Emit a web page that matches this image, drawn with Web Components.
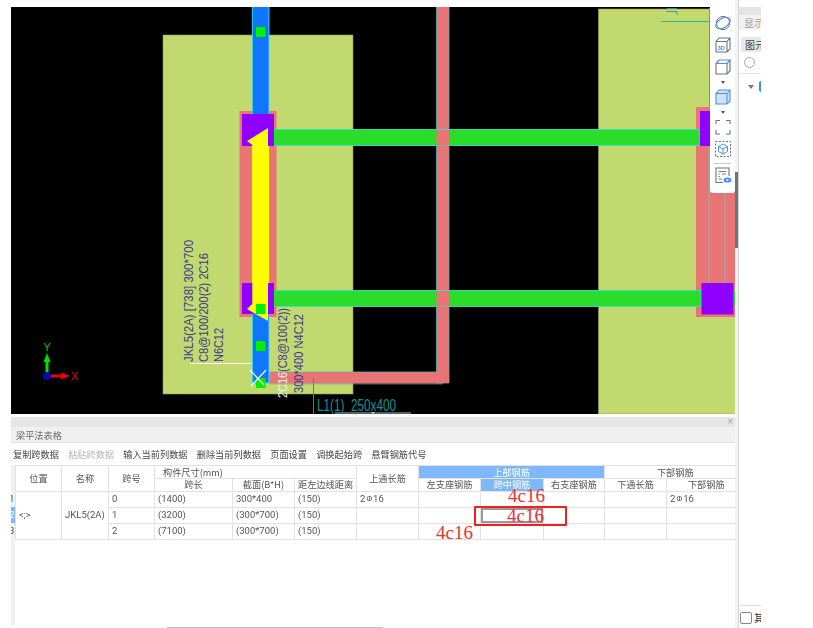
<!DOCTYPE html>
<html lang="zh">
<head>
<meta charset="utf-8">
<title>梁平法表格</title>
<style>
  html, body { margin: 0; height: 100%; background: #fff; overflow: hidden; }
  body { font-family: "Noto Sans CJK SC", "Liberation Sans", sans-serif; }
</style>
</head>
<body>
<beam-app>
  <cad-viewport slot="main"><view-toolbar></view-toolbar></cad-viewport>
  <beam-panel slot="main" title="梁平法表格">
    <span-table></span-table>
  </beam-panel>
  <side-panel slot="side"></side-panel>
</beam-app>

<script>
class BeamApp extends HTMLElement {
  constructor() {
    super();
    this.attachShadow({ mode: 'open' });
    this.shadowRoot.innerHTML = `
      <style>
        :host { display: flex; height: 628px; width: 761px; padding-left: 11px; box-sizing: border-box; overflow: hidden; }
        .main { width: 724px; display: flex; flex-direction: column; padding-top: 7px; box-sizing: border-box; }
        .side { width: 26px; display: flex; }
      </style>
      <div class="main"><slot name="main"></slot></div>
      <div class="side"><slot name="side"></slot></div>
    `;
  }
}

class CadViewport extends HTMLElement {
  constructor() {
    super();
    this.attachShadow({ mode: 'open' });
    const beamEdge = '#35e0d0';
    const squares = [[256, 27], [256, 304], [256, 341], [256, 378]]
      .map(([x, y]) => `<rect x="${x}" y="${y}" width="9.5" height="10" fill="#00f000"/>`)
      .join('');
    this.shadowRoot.innerHTML = `
      <style>
        :host { display: block; position: relative; width: 724px; height: 407px; background: #000; flex: none; }
        svg { display: block; }
        .cad { font-family: "Liberation Sans Narrow", "Liberation Sans", sans-serif; font-size: 13px; fill: #3d3a8e; }
        .axis { font-family: "Liberation Sans Narrow", "Liberation Sans", sans-serif; font-size: 11px; }
        .thumb { position: absolute; left: 324px; bottom: 0; width: 76px; height: 2px; background: #55606c; }
        .thumb::after { content: ""; position: absolute; left: 36px; top: 0; border: 2px solid transparent; border-top: 2px solid #c8ccd0; border-bottom: 0; }
      </style>
      <svg width="724" height="407" viewBox="11 7 724 407">
        <!-- slabs -->
        <rect x="163" y="35" width="190" height="359" fill="#c2d96f" stroke="#8f9f55" stroke-width=".6"/>
        <rect x="598.5" y="9" width="137" height="405" fill="#c2d96f" stroke="#8f9f55" stroke-width=".6"/>
        <path d="M661 21.500H709M709.500 8V107" stroke="#2fb59a" stroke-width="1" fill="none"/>
        <path d="M667 8.500H677M666 11.500H677V15" stroke="#2a9f96" stroke-width=".9" fill="none"/>

        <!-- pink beam L1 -->
        <rect x="436.500" y="6" width="12.500" height="377" fill="#ea7474" stroke="#45b8b8" stroke-width=".8"/>
        <rect x="269" y="372" width="180" height="11" fill="#ea7474"/>
        <path d="M269 372H436.500" stroke="#5fb0a8" stroke-width=".8" fill="none"/>
        <path d="M269 383.800H443" stroke="#8f9c94" stroke-width="1" fill="none"/>

        <!-- right column stack -->
        <rect x="696" y="107" width="40" height="210" fill="#ea7474"/>
        <path d="M709 146V283M725 146V283" stroke="#a0a0a0" stroke-width="1.600"/>

        <!-- left column stack -->
        <rect x="239.500" y="111" width="37" height="206" fill="#ea7474"/>

        <!-- green beams -->
        <rect x="273.500" y="129.500" width="426.500" height="16" fill="#2bdd2b" stroke="${beamEdge}" stroke-width=".9"/>
        <rect x="273.500" y="290.500" width="427.500" height="16" fill="#2bdd2b" stroke="${beamEdge}" stroke-width=".9"/>
        <rect x="733" y="290.500" width="3" height="16" fill="#2bdd2b"/>
        <rect x="436.500" y="130" width="12.500" height="15.500" fill="#ea7474"/>
        <rect x="436.500" y="291" width="12.500" height="15.500" fill="#ea7474"/>

        <rect x="252.300" y="6" width="16.700" height="377" fill="#1176ff" stroke="#3fe0ee" stroke-width=".9"/>
        <rect x="242" y="114" width="32" height="32" fill="#8f00ff"/>
        <rect x="242" y="283" width="32" height="31" fill="#8f00ff"/>
        <rect x="252.300" y="146" width="16.700" height="137" fill="#ffff00"/>
        <polygon points="268,128 247,141 252.300,145 252.300,304 247,309 268,321" fill="#ffff00"/>
        <rect x="700" y="111" width="34" height="35" fill="#8f00ff"/>
        <rect x="701.500" y="283" width="32" height="31.500" fill="#8f00ff"/>
        ${squares}

        <!-- leader lines -->
        <path d="M190 363.500H252" stroke="#fff" stroke-width="1"/>
        <path d="M251 386L266 370M250 370L264 385" stroke="#fff" stroke-width="1.200"/>
        <path d="M313.500 378V414" stroke="#129a96" stroke-width="1"/>

        <!-- annotations -->
        <text class="cad" transform="translate(193 362) rotate(-90)" textLength="122" lengthAdjust="spacingAndGlyphs">JKL5(2A) [738] 300*700</text>
        <text class="cad" transform="translate(208 362) rotate(-90)" textLength="109" lengthAdjust="spacingAndGlyphs">C8@100/200(2) 2C16</text>
        <text class="cad" transform="translate(223 362) rotate(-90)" textLength="34" lengthAdjust="spacingAndGlyphs">N6C12</text>
        <text class="cad" transform="translate(287 398) rotate(-90)" textLength="90" lengthAdjust="spacingAndGlyphs"><tspan fill="#eeeeee">2C16</tspan>(C8@100(2))</text>
        <text class="cad" transform="translate(303 393) rotate(-90)" textLength="79" lengthAdjust="spacingAndGlyphs">300*400 N4C12</text>
        <text x="317" y="411" font-family="'Liberation Sans Narrow','Liberation Sans',sans-serif" font-size="16" fill="#0f9494" textLength="79" lengthAdjust="spacingAndGlyphs" xml:space="preserve">L1(1)  250x400</text>

        <!-- axis gizmo -->
        <path d="M47 376V361" stroke="#00e000" stroke-width="3"/>
        <polygon points="47,353 43.500,362 50.500,362" fill="#00e000"/>
        <path d="M47 376H62" stroke="#f00000" stroke-width="3"/>
        <polygon points="70,376 61,372.500 61,379.500" fill="#f00000"/>
        <circle cx="47" cy="376" r="4" fill="#0808b0"/>
        <text class="axis" x="43.500" y="351" fill="#00c800">Y</text>
        <text class="axis" x="71" y="380" fill="#e80000">X</text>
      </svg>
      <div class="thumb"></div>
      <slot></slot>
    `;
  }
}

class ViewToolbar extends HTMLElement {
  constructor() {
    super();
    this.attachShadow({ mode: 'open' });
    const g = '#6a7484';
    const b = '#4a90e2';
    const caret = `<i class="caret"></i>`;
    const icon = (inner) => `<svg width="18" height="18" viewBox="0 0 18 18" fill="none">${inner}</svg>`;
    this.shadowRoot.innerHTML = `
      <style>
        :host { position: absolute; top: 0; right: 0; width: 25px; height: 186px; background: #fff; border-radius: 0 0 3px 3px; display: flex; flex-direction: column; align-items: center; padding-top: 7px; box-sizing: border-box; }
        svg { display: block; flex: none; }
        .caret { display: block; width: 0; height: 0; border: 2.500px solid transparent; border-top: 3px solid #555; border-bottom: 0; margin: 5px 0 4px; }
        .gap { height: 4px; flex: none; }
        .sep { width: 17px; height: 1px; background: #c8c8c8; margin: 5px 0 2px; flex: none; }
      </style>
      ${icon(`<circle cx="9" cy="9" r="6.600" stroke="${g}" stroke-width="1"/><ellipse cx="9" cy="9" rx="8" ry="4.600" transform="rotate(-32 9 9)" stroke="${b}" stroke-width="1.200"/>`)}
      <div class="gap"></div>
      ${icon(`<path d="M2 5.500L5 2H16V13L13 16H2Z M2 5.500H13V16 M13 5.500L16 2" stroke="${g}" stroke-width="1.100"/><text x="3.500" y="13.500" font-size="5.500" font-weight="700" fill="${b}" font-family="Liberation Sans, sans-serif">3D</text>`)}
      <div class="gap"></div>
      ${icon(`<path d="M2 5.500V16H13L16 13V2" stroke="${g}" stroke-width="1.100"/><path d="M13 5.500V16" stroke="${g}" stroke-width="1.100"/><path d="M2 5.500L5 2H16L13 5.500H2" stroke="${b}" stroke-width="1.200"/>`)}
      ${caret}
      ${icon(`<path d="M2 5.500L5 2H16V13L13 16H2Z" fill="#cfe2fa" stroke="${b}" stroke-width="1.100"/><path d="M2 5.500H13V16M13 5.500L16 2" stroke="${b}" stroke-width="1"/>`)}
      ${caret}
      ${icon(`<path d="M2 6V2.500H6M12 2.500H16V6M16 12V16H12M6 16H2V12" stroke="${g}" stroke-width="1.100"/>`)}
      <div class="gap"></div>
      ${icon(`<rect x="1.500" y="1.500" width="15" height="15" stroke="${g}" stroke-width="1" stroke-dasharray="2 1.500"/><path d="M9 4L13.500 6.500V11.500L9 14L4.500 11.500V6.500ZM4.500 6.500L9 9L13.500 6.500M9 9V14" stroke="${b}" stroke-width="1"/>`)}
      <div class="sep"></div>
      ${icon(`<path d="M15 10V2H2V16.500H9" stroke="${g}" stroke-width="1.100"/><path d="M4.500 5.500H12M4.500 8H6M8 8H12M4.500 10.500H6M4.500 13H8" stroke="${g}" stroke-width=".9"/><ellipse cx="13.500" cy="14" rx="4" ry="2.600" fill="${b}"/><circle cx="13.500" cy="14" r="1.100" fill="#fff"/>`)}
    `;
  }
}

class BeamPanel extends HTMLElement {
  constructor() {
    super();
    this.attachShadow({ mode: 'open' });
    const actions = [
      ['复制跨数据'], ['粘贴跨数据', true], ['输入当前列数据'], ['删除当前列数据'],
      ['页面设置'], ['调换起始跨'], ['悬臂钢筋代号'],
    ];
    this.shadowRoot.innerHTML = `
      <style>
        :host { display: flex; flex-direction: column; margin-top: 3px; flex: 1; min-height: 0; font-size: 9.200px; color: #555; }
        .grip { height: 10px; background: #e6e6e6; display: flex; justify-content: flex-end; align-items: center; padding-right: 2px; color: #a8a8a8; font: 10px/10px "Liberation Sans", sans-serif; }
        .title { height: 15px; background: #f0f0f0; border-bottom: 1px solid #e2e2e2; padding-left: 5px; line-height: 16px; color: #666; filter: blur(.25px); }
        .actions { height: 22px; display: flex; gap: 9.200px; padding-left: 2px; align-items: center; color: #444; filter: blur(.25px); }
        .actions .off { color: #b8b8b8; }
        .scroll { height: 1px; width: 216px; margin-left: 156px; background: #bdbdbd; }
      </style>
      <div class="grip"><span>×</span></div>
      <div class="title"></div>
      <div class="actions">${actions
        .map(([label, off]) => `<span class="${off ? 'off' : ''}">${label}</span>`)
        .join('')}</div>
      <slot></slot>
      <div class="scroll"></div>
    `;
    this.shadowRoot.querySelector('.title').textContent = this.getAttribute('title');
  }
}

class SpanTable extends HTMLElement {
  constructor() {
    super();
    this.attachShadow({ mode: 'open' });
    const widths = [46, 47, 46, 78, 62, 62, 62, 62, 63, 61, 62, 69];
    const bar = `2<span class="bar">Φ</span>16`;
    const rows = [
      ['0', '(1400)', '300*400', '(150)', bar, '', '', '', '', bar],
      ['1', '(3200)', '(300*700)', '(150)', '', '', '', '', '', ''],
      ['2', '(7100)', '(300*700)', '(150)', '', '', '', '', '', ''],
    ];
    const body = rows
      .map((r, i) => {
        const lead = i === 0
          ? `<td rowspan="3" class="pos">&lt;;&gt;</td><td rowspan="3" class="c">JKL5(2A)</td>`
          : '';
        const cells = r
          .map((v, j) => `<td${i === 1 && j === 6 ? ' class="sel"' : ''}>${v}</td>`)
          .join('');
        return `<tr>${lead}${cells}</tr>`;
      })
      .join('');
    this.shadowRoot.innerHTML = `
      <style>
        :host { display: flex; flex: 1; min-height: 0; position: relative; font-size: 9.200px; color: #555; }
        .gutter { width: 4px; flex: none; background: #f0f0f0; padding-top: 26px; margin-bottom: 2px; overflow: hidden; box-sizing: border-box; font: 9.500px/16px Roboto, sans-serif; }
        .gutter div { height: 16px; text-indent: -2px; }
        .gutter .on { background: #7fb8f8; color: #fff; }
        table { border-collapse: collapse; table-layout: fixed; width: 720px; height: 74px; align-self: flex-start; filter: blur(.25px); }
        th, td { border: 1px solid #e2e2e2; padding: 0; overflow: hidden; white-space: nowrap; font-weight: 400; }
        th:last-child, td:last-child { border-right: 0; }
        th { height: 12px; line-height: 12px; text-align: center; }
        thead tr:first-child th[rowspan] { height: 23px; padding-bottom: 2px; }
        thead tr:last-child th { height: 10px; line-height: 10px; padding-bottom: 2px; }
        td { height: 13px; line-height: 11px; padding: 0 0 2px 3px; font-family: Roboto, "Noto Sans CJK SC", sans-serif; font-size: 9.500px; color: #555; }
        td.c { padding: 0 0 2px; text-align: center; }
        td.sel { box-shadow: inset 0 0 0 2px #999; }
        .bar { font-size: 8px; position: relative; top: -1px; padding: 0 1px; }
        .blue { background: #7fb8f8; color: #fff; }
        .left { text-align: left; padding-left: 8px; }
        thead tr:last-child .shift { padding-left: 10px; }
        .nudge { padding-left: 10px; }
        .note { position: absolute; font: 19px/19px "Liberation Serif", serif; color: #f03030; white-space: nowrap; }
        .box { position: absolute; left: 463px; top: 41px; width: 93px; height: 20px; box-sizing: border-box; border: 2px solid #f21f1f; border-radius: 1px; }
      </style>
      <div class="gutter"><div>1</div><div class="on">2</div><div>3</div></div>
      <table>
        <colgroup>${widths.map((w) => `<col style="width:${w}px">`).join('')}</colgroup>
        <thead>
          <tr>
            <th rowspan="2">位置</th><th rowspan="2">名称</th><th rowspan="2">跨号</th>
            <th colspan="3" class="left">构件尺寸(mm)</th>
            <th rowspan="2">上通长筋</th>
            <th colspan="3" class="blue">上部钢筋</th>
            <th colspan="2" class="nudge">下部钢筋</th>
          </tr>
          <tr>
            <th>跨长</th><th>截面(B*H)</th><th>距左边线距离</th>
            <th>左支座钢筋</th><th class="blue">跨中钢筋</th><th>右支座钢筋</th>
            <th>下通长筋</th><th class="shift">下部钢筋</th>
          </tr>
        </thead>
        <tbody>${body}</tbody>
      </table>
      <span class="note" style="left:497px;top:21px">4c16</span>
      <span class="note" style="left:496px;top:41px">4c16</span>
      <span class="note" style="left:425px;top:58px">4c16</span>
      <div class="box"></div>
    `;
  }
}

class SidePanel extends HTMLElement {
  constructor() {
    super();
    this.attachShadow({ mode: 'open' });
    this.shadowRoot.innerHTML = `
      <style>
        :host { display: flex; width: 26px; height: 628px; font-size: 10px; color: #555; overflow: hidden; flex: none; }
        .rail { width: 3px; background: #f4f4f4; padding-top: 172px; box-sizing: border-box; flex: none; }
        .rail div { height: 76px; background: #6c747c; }
        .body { flex: 1; border-left: 1px solid #d4d4d4; display: flex; flex-direction: column; padding-top: 7px; overflow: hidden; }
        .head { height: 23px; background: linear-gradient(#e4e4e4 0 8px, #f2f2f2 8px); line-height: 31px; padding-left: 5px; color: #b09a78; white-space: nowrap; flex: none; }
        .tabs { height: 44px; padding: 7px 0 0 2px; box-sizing: border-box; border-bottom: 1px solid #e4e4e4; flex: none; }
        .tab { background: #e8e8e8; height: 15px; line-height: 15px; padding-left: 4px; white-space: nowrap; color: #444; }
        .radio { width: 9px; height: 9px; border: 1px solid #aaa; border-radius: 50%; margin: 5px 0 0 3px; }
        .tree { display: flex; align-items: center; padding: 7px 0 0 9px; align-self: flex-start; flex: none; }
        .tri { width: 0; height: 0; border: 3px solid transparent; border-top: 4px solid #777; border-bottom: 0; margin-right: 5px; }
        .node { width: 8px; height: 11px; background: #3d8fe8; border-radius: 2px; }
        .foot { height: 23px; border-top: 1px solid #ddd; display: flex; align-items: center; gap: 2px; padding-left: 1px; padding-top: 1px; margin-top: auto; flex: none; white-space: nowrap; box-sizing: border-box; color: #333; }
        .check { width: 10px; height: 10px; border: 1px solid #888; border-radius: 2px; flex: none; }
      </style>
      <div class="rail"><div></div></div>
      <div class="body">
        <div class="head">显示设置</div>
        <div class="tabs"><div class="tab">图元显示</div><div class="radio"></div></div>
        <div class="tree"><i class="tri"></i><i class="node"></i></div>
        <div class="foot"><i class="check"></i><span>其他</span></div>
      </div>
    `;
  }
}

customElements.define('beam-app', BeamApp);
customElements.define('cad-viewport', CadViewport);
customElements.define('view-toolbar', ViewToolbar);
customElements.define('beam-panel', BeamPanel);
customElements.define('span-table', SpanTable);
customElements.define('side-panel', SidePanel);
</script>
</body>
</html>
